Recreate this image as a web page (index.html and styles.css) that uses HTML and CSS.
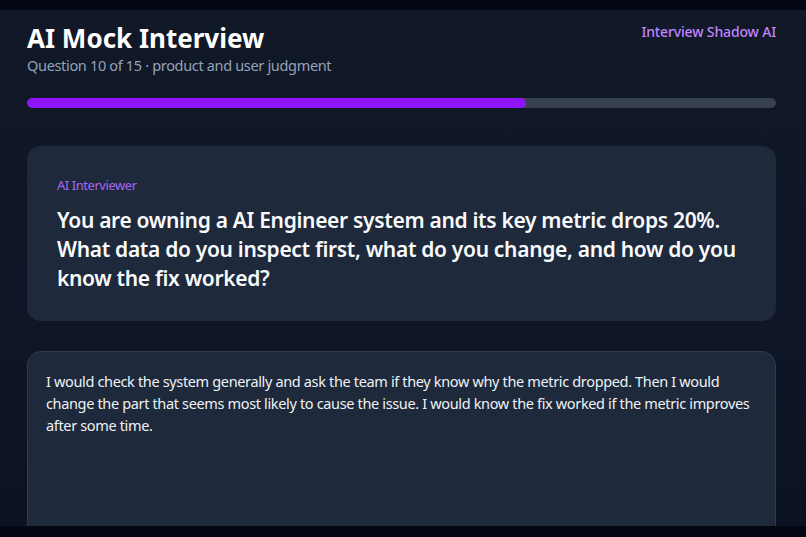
FILE: index.html
```html
<!DOCTYPE html>
<html lang="en">
<head>
<meta charset="utf-8">
<title>AI Mock Interview</title>
<link rel="stylesheet" href="styles.css">
</head>
<body>
<div class="topstrip"></div>
<main class="page">
  <header class="header">
    <div class="titles">
      <h1 class="title">AI Mock Interview</h1>
      <div class="subtitle">Question 10 of 15 · product and user judgment</div>
    </div>
    <div class="brand">Interview Shadow AI</div>
  </header>
  <div class="progress"><div class="progress-fill" style="width:66.67%"></div></div>
  <section class="card question-card">
    <div class="label">AI Interviewer</div>
    <p class="question">You are owning a AI Engineer system and its key metric drops 20%. What data do you inspect first, what do you change, and how do you know the fix worked?</p>
  </section>
  <section class="card answer-card">
    <p class="answer">I would check the system generally and ask the team if they know why the metric dropped. Then I would change the part that seems most likely to cause the issue. I would know the fix worked if the metric improves after some time.</p>
  </section>
</main>
<div class="bottomstrip"></div>
</body>
</html>
```

FILE: styles.css
```css
* { box-sizing: border-box; }
html, body { margin: 0; padding: 0; }
body {
  background: #030712;
  font-family: "Noto Sans", "Open Sans", sans-serif;
  color: #f1f5f9;
  height: 537px;
  overflow: hidden;
  display: flex;
  flex-direction: column;
}
.topstrip { height: 10px; background: #030712; flex: none; }
.bottomstrip { height: 11px; background: #030712; flex: none; }
.page {
  flex: 1;
  overflow: hidden;
  background: linear-gradient(180deg, #111827 0%, #0e1627 60%, #0b1221 100%);
  padding: 12px 30px 0 27px;
}
.header {
  display: flex;
  justify-content: space-between;
  align-items: flex-start;
}
.title {
  margin: 0;
  font-size: 26px;
  line-height: 32px;
  font-weight: 700;
  color: #ffffff;
}
.subtitle {
  margin-top: 1px;
  font-size: 14.5px;
  line-height: 20px;
  color: #94a3b8;
  letter-spacing: -0.33px;
}
.brand {
  margin-top: 0;
  font-size: 14px;
  line-height: 20px;
  font-weight: 500;
  color: #c084fc;
  letter-spacing: -0.15px;
}
.progress {
  margin-top: 23px;
  height: 10px;
  border-radius: 5px;
  background: #374151;
  overflow: hidden;
}
.progress-fill {
  height: 100%;
  background: #9013fe;
  border-radius: 5px;
}
.card {
  background: #1e293b;
  border-radius: 14px;
}
.question-card {
  margin-top: 38px;
  padding: 30px 28px 28px 30px;
}
.label {
  font-size: 13px;
  line-height: 18px;
  color: #a865f5;
  letter-spacing: -0.45px;
}
.question {
  margin: 12px 0 0 0;
  font-size: 21px;
  line-height: 29px;
  font-weight: 600;
  color: #f8fafc;
  letter-spacing: -0.32px;
}
.answer-card {
  margin-top: 30px;
  border: 1px solid #2d3a4f;
  padding: 18px 18px;
  height: 260px;
}
.answer {
  margin: 0;
  font-size: 14.5px;
  line-height: 22px;
  color: #eef2f7;
  letter-spacing: -0.35px;
}
```
